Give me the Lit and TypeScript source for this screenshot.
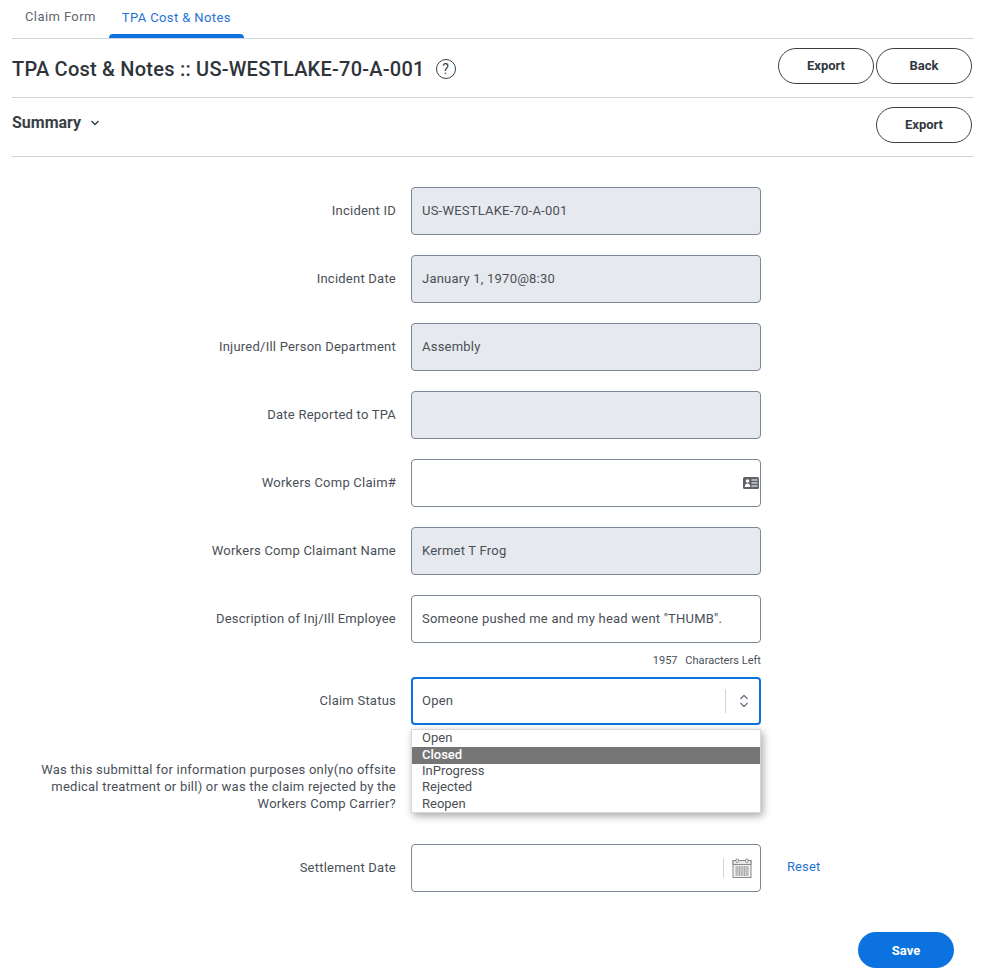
import { LitElement, html, css } from "lit";
import { customElement } from "lit/decorators.js";

const chevronSelect = html`<svg class="updown" width="10" height="16" viewBox="0 0 10 16" fill="none" stroke="#6b7280" stroke-width="1.3"><path d="M1.5 6 5 2.5 8.5 6"/><path d="M1.5 10 5 13.5 8.5 10"/></svg>`;
const idCard = html`<svg class="card" width="16" height="12" viewBox="0 0 16 12"><rect width="16" height="12" rx="1.5" fill="#5f6368"/><circle cx="4.5" cy="4" r="1.8" fill="#fff"/><path d="M1.8 10c0-2.4 1-3.6 2.7-3.6S7.2 7.6 7.2 10z" fill="#fff"/><path d="M8.5 3h6M8.5 6h6M8.5 9h6" stroke="#fff" stroke-width="1.2"/></svg>`;
const calendar = html`<svg width="20" height="20" viewBox="0 0 20 20" fill="none"><rect x="1" y="2.5" width="18" height="17" fill="#f1f1f1" stroke="#8a8a8a"/><rect x="1" y="2.5" width="18" height="4" fill="#e8e8e8" stroke="#8a8a8a"/><rect x="4" y="1" width="2.4" height="3.5" rx="1" fill="#fff" stroke="#888"/><rect x="13.6" y="1" width="2.4" height="3.5" rx="1" fill="#fff" stroke="#888"/><path d="M3 9h14M3 11h14M3 13h14M3 15h14M3 17h14M5 8v10M7.5 8v10M10 8v10M12.5 8v10M15 8v10" stroke="#a0a0a0" stroke-width=".8"/></svg>`;

@customElement("app-root")
export class AppRoot extends LitElement {
  static styles = css`
    :host { display: block; width: 986px; height: 973px; background: #fff; font-family: Roboto, sans-serif; font-size: 13px; color: #4a4f57; overflow: hidden; letter-spacing: 0.23px; }
    .page { padding: 0 12px; display: flex; flex-direction: column; }
    .tabs { display: flex; height: 38px; border-bottom: 1px solid #ced4da; letter-spacing: 0.4px; }
    .tab { padding: 0 13px; line-height: 33px; color: #5f6670; position: relative; }
    .tab.active { color: #1f74d6; line-height: 35px; }
    .tab.active::after { content: ""; position: absolute; left: 0; right: 0; bottom: 0; height: 4px; background: #0b72e0; border-radius: 4px 4px 0 0; }
    .bar { display: flex; align-items: center; border-bottom: 1px solid #ced4da; height: 58px; }
    .title { font-size: 20px; font-weight: 500; color: #2f343b; letter-spacing: 0.23px; margin: 1px 0 0; }
    .help { box-sizing: border-box; width: 20px; height: 20px; margin: 2px 0 0 11px; border: 1px solid #3a3f47; border-radius: 50%; font-size: 14px; text-align: center; line-height: 18px; color: #3a3f47; letter-spacing: 0; }
    .spacer { flex: 1; }
    .btns { display: flex; gap: 2px; margin: 0 2px 4px 0; }
    .btn { width: 96px; height: 36px; box-sizing: border-box; border: 1px solid #3a3f47; border-radius: 18px; font-weight: 700; color: #333840; background: #fff; display: flex; align-items: center; justify-content: center; font-family: inherit; font-size: 13px; letter-spacing: 0; padding: 0 0 2px; }
    .summary { font-size: 16px; font-weight: 700; color: #3a3f47; letter-spacing: 0; align-self: flex-start; line-height: 50px; display: flex; align-items: center; gap: 9px; }
    .form { display: flex; flex-direction: column; margin-top: 30px; }
    .row { display: grid; grid-template-columns: 384px 350px auto; column-gap: 15px; align-items: center; margin-bottom: 20px; }
    .label { text-align: right; line-height: 17px; padding-bottom: 2px; }
    .field { position: relative; box-sizing: border-box; height: 48px; border: 1px solid #7b8794; border-radius: 4px; padding: 0 10px 2px; display: flex; align-items: center; background: #fff; letter-spacing: 0.22px; }
    .field.ro { background: #e6e9ed; }
    .field .card { position: absolute; right: 1px; top: 17px; }
    .count { margin: -9px 0 6px 399px; width: 350px; text-align: right; font-size: 11px; line-height: 14px; height: 17px; letter-spacing: 0.03px; }
    .count span { margin-right: 5px; }
    .status { border: 2px solid #0b72e0; padding: 0 9px 2px; justify-content: space-between; }
    .sep { width: 1px; height: 24px; background: #d0d4d9; }
    .status .sep { position: absolute; right: 33px; top: 10px; }
    .status .updown { position: absolute; right: 10px; top: 14px; }
    .question { margin-bottom: 0; height: 99px; position: relative; align-items: start; }
    .question .label { padding: 16px 0 0; }
    .drop { position: absolute; left: 399px; top: -16px; width: 350px; box-sizing: border-box; height: 84px; background: #fff; border: 1px solid #d8d8d8; box-shadow: 2px 3px 8px rgba(0,0,0,.35); padding-top: 1px; letter-spacing: 0; }
    .opt { padding-left: 10px; height: 16.4px; line-height: 13px; }
    .opt.sel { background: #767676; color: #fff; font-weight: 500; line-height: 15px; }
    .date .sep { position: absolute; right: 36px; top: 13px; height: 20px; }
    .date svg { position: absolute; right: 8px; top: 13px; }
    .reset { color: #1f74d6; padding-left: 11px; padding-bottom: 4px; letter-spacing: 0.1px; }
    .foot { display: flex; justify-content: flex-end; padding: 20px 20px 0 0; }
    .save { width: 96px; height: 36px; border: 0; border-radius: 18px; background: #0b72e0; color: #fff; font-weight: 700; font-family: inherit; font-size: 13px; padding: 0; }
  `;

  private roRow(label: string, value: string) {
    return html`<div class="row"><div class="label">${label}</div><div class="field ro">${value}</div></div>`;
  }

  render() {
    return html`<div class="page">
      <div class="tabs">
        <div class="tab">Claim Form</div>
        <div class="tab active">TPA Cost &amp; Notes</div>
      </div>
      <div class="bar">
        <h1 class="title">TPA Cost &amp; Notes :: US-WESTLAKE-70-A-001</h1>
        <div class="help">?</div>
        <div class="spacer"></div>
        <div class="btns"><button class="btn">Export</button><button class="btn">Back</button></div>
      </div>
      <div class="bar">
        <div class="summary">Summary <svg width="10" height="6" viewBox="0 0 10 6" fill="none" stroke="#3a3f47" stroke-width="1.4"><path d="M1.5 1 5 4.5 8.5 1"/></svg></div>
        <div class="spacer"></div>
        <div class="btns"><button class="btn">Export</button></div>
      </div>
      <div class="form">
        ${this.roRow("Incident ID", "US-WESTLAKE-70-A-001")}
        ${this.roRow("Incident Date", "January 1, 1970@8:30")}
        ${this.roRow("Injured/Ill Person Department", "Assembly")}
        ${this.roRow("Date Reported to TPA", "")}
        <div class="row"><div class="label">Workers Comp Claim#</div><div class="field">${idCard}</div></div>
        ${this.roRow("Workers Comp Claimant Name", "Kermet T Frog")}
        <div class="row"><div class="label">Description of Inj/Ill Employee</div><div class="field">Someone pushed me and my head went "THUMB".</div></div>
        <div class="count"><span>1957</span> Characters Left</div>
        <div class="row"><div class="label">Claim Status</div><div class="field status">Open<div class="sep"></div>${chevronSelect}</div></div>
        <div class="row question">
          <div class="label">Was this submittal for information purposes only(no offsite medical treatment or bill) or was the claim rejected by the Workers Comp Carrier?</div>
          <div class="drop">
            <div class="opt">Open</div><div class="opt sel">Closed</div><div class="opt">InProgress</div><div class="opt">Rejected</div><div class="opt">Reopen</div>
          </div>
        </div>
        <div class="row"><div class="label">Settlement Date</div><div class="field date"><div class="sep"></div>${calendar}</div><div class="reset">Reset</div></div>
      </div>
      <div class="foot"><button class="save">Save</button></div>
    </div>`;
  }
}
